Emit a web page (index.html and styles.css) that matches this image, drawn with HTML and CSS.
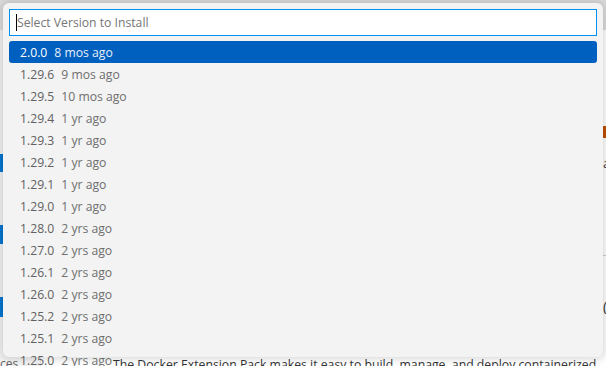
FILE: index.html
```html
<!DOCTYPE html>
<html>
<head>
<meta charset="utf-8">
<link rel="stylesheet" href="styles.css">
</head>
<body>
<div class="page">
  <div class="titlebar"></div>
  <div class="content">
    <div class="side">
      <div class="mark m1"></div>
      <div class="mark m2"></div>
      <div class="mark m3"></div>
      <div class="side-text">ces</div>
    </div>
    <div class="main">
      <div class="accent"></div>
      <div class="glyph g1">a</div>
      <div class="rule"></div>
      <div class="glyph g2">(</div>
      <p class="desc">The Docker Extension Pack makes it easy to build, manage, and deploy containerized</p>
    </div>
  </div>
</div>

<div class="quick">
  <div class="input"><span class="caret"></span><span class="placeholder">Select Version to Install</span></div>
  <ul class="list">
    <li class="row selected"><span class="label">2.0.0</span><span class="ago">8 mos ago</span></li>
    <li class="row"><span class="label">1.29.6</span><span class="ago">9 mos ago</span></li>
    <li class="row"><span class="label">1.29.5</span><span class="ago">10 mos ago</span></li>
    <li class="row"><span class="label">1.29.4</span><span class="ago">1 yr ago</span></li>
    <li class="row"><span class="label">1.29.3</span><span class="ago">1 yr ago</span></li>
    <li class="row"><span class="label">1.29.2</span><span class="ago">1 yr ago</span></li>
    <li class="row"><span class="label">1.29.1</span><span class="ago">1 yr ago</span></li>
    <li class="row"><span class="label">1.29.0</span><span class="ago">1 yr ago</span></li>
    <li class="row"><span class="label">1.28.0</span><span class="ago">2 yrs ago</span></li>
    <li class="row"><span class="label">1.27.0</span><span class="ago">2 yrs ago</span></li>
    <li class="row"><span class="label">1.26.1</span><span class="ago">2 yrs ago</span></li>
    <li class="row"><span class="label">1.26.0</span><span class="ago">2 yrs ago</span></li>
    <li class="row"><span class="label">1.25.2</span><span class="ago">2 yrs ago</span></li>
    <li class="row"><span class="label">1.25.1</span><span class="ago">2 yrs ago</span></li>
    <li class="row"><span class="label">1.25.0</span><span class="ago">2 yrs ago</span></li>
  </ul>
</div>
</body>
</html>
```

FILE: styles.css
```css
html, body {
  margin: 0;
  padding: 0;
}
body {
  width: 606px;
  height: 366px;
  overflow: hidden;
  background: #ffffff;
  font-family: "Open Sans", "Noto Sans", sans-serif;
}
.page {
  display: flex;
  flex-direction: column;
  height: 366px;
}
.titlebar {
  height: 30px;
  background: #dddddd;
}
.content {
  flex: 1;
  display: flex;
}
.side {
  width: 40px;
  background: #f3f3f3;
  border-right: 1px solid #e0e0e0;
  display: flex;
  flex-direction: column;
}
.mark {
  width: 3px;
  background: #0078d4;
}
.m1 { height: 18px; margin-top: 124px; }
.m2 { height: 19px; margin-top: 53px; }
.m3 { height: 20px; margin-top: 53px; }
.side-text {
  margin-top: auto;
  font-size: 12px;
  color: #616161;
  line-height: 14px;
  height: 9px;
}
.main {
  flex: 1;
  display: flex;
  flex-direction: column;
  padding-left: 71px;
}
.accent {
  align-self: flex-end;
  width: 4px;
  height: 12px;
  background: #c25100;
  margin-top: 96px;
}
.glyph {
  align-self: flex-end;
  width: 3px;
  overflow: hidden;
  font-size: 13px;
  line-height: 14px;
  color: #333333;
}
.g1 { margin-top: 18px; }
.rule {
  align-self: flex-end;
  width: 4px;
  border-top: 1px solid #cccccc;
  margin-top: 85px;
}
.g2 { margin-top: 44px; font-size: 14px; }
.desc {
  margin: auto 0 0 0;
  padding-left: 1px;
  font-size: 12.25px;
  line-height: 16px;
  height: 9px;
  color: #333333;
  white-space: nowrap;
  overflow: hidden;
}

.quick {
  position: absolute;
  left: 3px;
  top: 3px;
  width: 600px;
  height: 354px;
  box-sizing: border-box;
  padding: 6px 6px 0 6px;
  background: #f3f3f3;
  border-radius: 6px;
  box-shadow: 0 0 8px 2px rgba(0, 0, 0, 0.16);
}
.input {
  height: 27px;
  box-sizing: border-box;
  border: 1px solid #0090f1;
  background: #ffffff;
  display: flex;
  align-items: center;
  padding-left: 6px;
  font-size: 12.2px;
}
.caret {
  width: 1px;
  height: 17px;
  background: #000000;
}
.placeholder {
  color: #767676;
}
.list {
  list-style: none;
  margin: 5px 0 0 0;
  padding: 0;
}
.row {
  height: 22px;
  display: flex;
  align-items: center;
  padding-left: 11px;
  font-size: 12.2px;
  color: #616161;
  border-radius: 3px;
}
.ago {
  margin-left: 7px;
  opacity: 0.9;
}
.selected {
  background: #0060c0;
  color: #ffffff;
}
```
